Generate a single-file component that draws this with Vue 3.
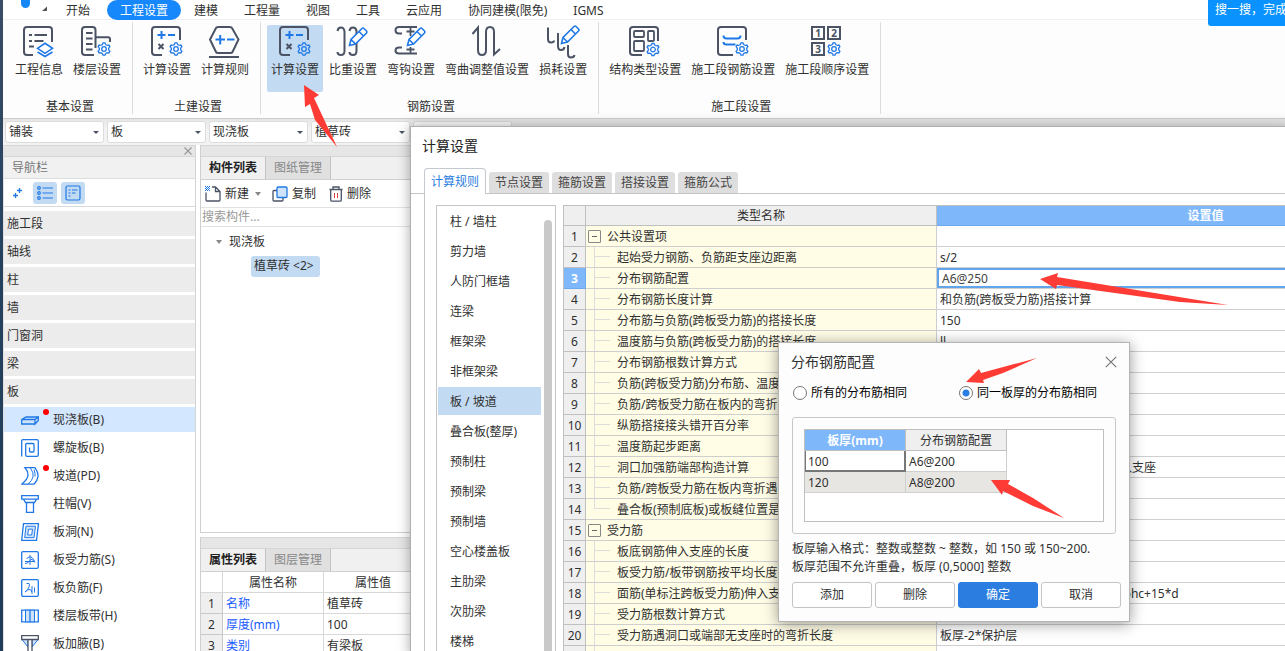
<script setup>
import { ref } from 'vue'

const DARK = '#4b5365'
const BLUE = '#1f78e6'
const LIGHT = '#cfe3fb'

const dark = (d, w = 2) => ({ d, stroke: DARK, w })
const blue = (d, w = 2) => ({ d, stroke: BLUE, w })
const line = (d, fill, w = 1.3) => ({ d, stroke: BLUE, w, fill })

function gear(cx, cy) {
  const points = []
  for (let i = 0; i < 6; i++) {
    const base = -90 + i * 60
    for (const [offset, radius] of [[-30, 4.6], [-15, 5.2], [-9, 6.3], [9, 6.3], [15, 5.2]]) {
      const a = ((base + offset) * Math.PI) / 180
      points.push(`${(cx + radius * Math.cos(a)).toFixed(2)} ${(cy + radius * Math.sin(a)).toFixed(2)}`)
    }
  }
  const hub = `M${cx - 2.3} ${cy}a2.3 2.3 0 1 0 4.6 0a2.3 2.3 0 1 0 -4.6 0z`
  return blue(`M${points.join('L')}Z${hub}`, 1.3)
}

function pencil(dx = 0, dy = 0) {
  return {
    d: `M${13.5 + dx} ${20.5 + dy}l1.5 -6L${26 + dx} ${3.5 + dy}q1 -1 2 0l2.5 2.5q1 1 0 2L${19.5 + dx} ${19 + dy}zM${23 + dx} ${6.5 + dy}l4.5 4.5M${15 + dx} ${14.5 + dy}l4.5 4.5`,
    stroke: BLUE,
    w: 1.6,
    fill: '#fff',
  }
}

const calcIcon = [
  dark('M12 30H5q-3 0-3-3V5q0-3 3-3h22q3 0 3 3v10'),
  blue('M7.5 10h8M11.5 6v8M18 10h7'),
  dark('M8.5 19l5 5M13.5 19l-5 5'),
  gear(26, 24),
]

const ribbon = [
  {
    label: '基本设置',
    tools: [
      {
        label: '工程信息',
        paths: [
          dark('M11 30H5q-3 0-3-3V5q0-3 3-3h22q3 0 3 3v12'),
          dark('M7 10h3M12.5 10H25M7 16h3M12.5 16h9M7 21.5h5', 1.8),
          blue('M15.5 23.3l7.5-5 7.5 5-7.5 5zM15.5 27l7.5 4.5 7.5-4.5', 1.6),
        ],
      },
      {
        label: '楼层设置',
        paths: [
          dark('M14 30H5q-3 0-3-3V5q0-3 3-3h7.5q3 0 3 3v18M15.5 12.3H28q2 0 2 2V17'),
          dark('M6 8h6.5M6 13.5h6.5M6 19h6.5M6 24.5h6.5', 1.8),
          gear(24, 24),
        ],
      },
    ],
  },
  {
    label: '土建设置',
    tools: [
      { label: '计算设置', paths: calcIcon },
      {
        label: '计算规则',
        paths: [
          dark('M2 14.5L8 3q.5-1 2-1h12q1.5 0 2 1l6.5 11.5L24.5 27q-.5 1-2 1H10q-1.5 0-2-1z'),
          dark('M1 32h30'),
          blue('M7.5 14.5h9.5M12.2 10v9.5M19 14.5h7.5'),
        ],
      },
    ],
  },
  {
    label: '钢筋设置',
    tools: [
      { label: '计算设置', active: true, paths: calcIcon },
      {
        label: '比重设置',
        paths: [
          dark('M1.5 6q.5-3.5 3.5-3.5t3.5 4V26q0 4-3.5 4t-3.5-3'),
          dark('M13.5 6q.5-3.5 3.5-3.5t3.5 3.5V26q0 4-3.5 4t-3.5-3'),
          pencil(),
        ],
      },
      {
        label: '弯钩设置',
        paths: [
          dark('M8 8.5H5q-3.5 0-3.5-3.2t3.5-3.3H23M8 22.5H5q-3.5 0-3.5 3t3.5 3H23'),
          dark('M16.5 2v9M12.5 6.5h8M16.5 22v6M12.5 24.5h8', 1.8),
          pencil(),
        ],
      },
      {
        label: '弯曲调整值设置',
        paths: [dark('M2.5 9L8 2.5V25q0 5 4 5t4-5V7q0-5 4-5t4 5V29.5L30 24')],
      },
      {
        label: '损耗设置',
        paths: [
          dark('M2 2.5V14q0 3.5 3 3.5t3-2M12 8v13q0 4 3 4t3.5-3M22 20v9q0 3.5 3 3.5t3.5-2.5'),
          pencil(2, -2),
        ],
      },
    ],
  },
  {
    label: '施工段设置',
    tools: [
      {
        label: '结构类型设置',
        paths: [
          dark('M14 30H5q-3 0-3-3V5q0-3 3-3h22q3 0 3 3v11'),
          dark('M7 6h8q1 0 1 1v4q0 1-1 1H7q-1 0-1-1V7q0-1 1-1zM21 6h4q1 0 1 1v8q0 1-1 1h-4q-1 0-1-1V7q0-1 1-1zM7 16h8q1 0 1 1v8q0 1-1 1H7q-1 0-1-1v-8q0-1 1-1z', 1.8),
          gear(25, 24.5),
        ],
      },
      {
        label: '施工段钢筋设置',
        paths: [
          dark('M17 30H5q-3 0-3-3V5q0-3 3-3h22q3 0 3 3v10'),
          blue('M7.5 10.5q0 3 3 3h11q3 0 3-3M7.5 17q0 2.500 3 2.500h9'),
          gear(26, 24),
        ],
      },
      {
        label: '施工段顺序设置',
        digits: [
          { n: '1', x: 8, y: 12 },
          { n: '2', x: 24, y: 12 },
          { n: '3', x: 8, y: 28 },
        ],
        paths: [dark('M2 2h12v12H2zM18 2h12v12H18zM2 18h12v12H2z'), gear(24, 24)],
      },
    ],
  },
]

const menus = ['开始', '工程设置', '建模', '工程量', '视图', '工具', '云应用', '协同建模(限免)', 'IGMS']
const selectors = ['铺装', '板', '现浇板', '植草砖', '']
const categories = ['施工段', '轴线', '柱', '墙', '门窗洞', '梁', '板']

const boxed = 'M2 .7h14q1.300 0 1.300 1.300v14q0 1.300-1.300 1.300H2Q.7 17.300 .7 16V2Q.7 .7 2 .7z'
const elements = [
  { label: '现浇板(B)', active: true, hot: true, paths: [line('M.7 8.500L5 6h12.300l-3.300 2.500zM14 8.500l3.300-2.500v3.500L14 13zM.7 8.500V13H14V8.500', LIGHT)] },
  { label: '螺旋板(B)', paths: [line('M.7 17.500V2Q.7 .7 2 .7h14q1.300 0 1.300 1.300v14q0 1.300-1.300 1.300H6q-1.300 0-1.300-1.300V5.500q0-1 1-1H12q1 0 1 1V12q0 1-1 1H9.500q-1 0-1-1V8.500')] },
  { label: '坡道(PD)', hot: true, paths: [line('M4 .7H14q3.500 5 3 9t-4 7.500H.7Q7 12 7 8T4 .7z'), line('M9.500 1q3.500 5 2.500 9T7 17', undefined, 1), line('M13 2.500q1.500 4 1 7', undefined, 1)] },
  { label: '柱帽(V)', paths: [line('M.7 .7h16.600v3.500H.7zM2.500 4.200h13l-2 3.300h-9zM5.500 7.500h7v9.800h-7z')] },
  { label: '板洞(N)', paths: [line('M2.500 .7h15L15.500 17.300H.7z'), line('M5 3.200h9.500L13 14.700H3.700z', LIGHT, 1), line('M7.500 6.200h4L10.700 12H6.700z', '#fff', 1)] },
  { label: '板受力筋(S)', paths: [line(boxed), line('M9 4v10M5.500 7.500q3.500-3 5.500-1t2.500 4M4 12.500q3.500 0 5-3t5 2M4 10.500h10', undefined, 1)] },
  { label: '板负筋(F)', paths: [line(boxed), line('M5.500 4.500H8q1 .5 0 3.500T4 13q3-3 5-2.500t1.500 2.500M11 7v8M13.500 8.500v5', undefined, 1)] },
  { label: '楼层板带(H)', paths: [line('M.7 3.200h16.600v11.600H.7z'), line('M4.500 3.200h9v11.600h-9z', LIGHT, 1), line('M9 3.200v11.600')] },
  { label: '板加腋(B)', paths: [line('M1 4.500L7 12V4.500zM17 4.500L11 12V4.500z', LIGHT, 1), { d: 'M.7 .7h16.600v3.800H.7zM7 4.500h4V18H7z', stroke: DARK, w: 1.3, fill: '#fff' }] },
]

const properties = [
  { name: '名称', value: '植草砖' },
  { name: '厚度(mm)', value: '100' },
  { name: '类别', value: '有梁板' },
]

const dialogTabs = ['计算规则', '节点设置', '箍筋设置', '搭接设置', '箍筋公式']
const members = ['柱 / 墙柱', '剪力墙', '人防门框墙', '连梁', '框架梁', '非框架梁', '板 / 坡道', '叠合板(整厚)', '预制柱', '预制梁', '预制墙', '空心楼盖板', '主肋梁', '次肋梁', '楼梯']
const rules = [
  { name: '公共设置项', group: true },
  { name: '起始受力钢筋、负筋距支座边距离', value: 's/2' },
  { name: '分布钢筋配置', edit: true },
  { name: '分布钢筋长度计算', value: '和负筋(跨板受力筋)搭接计算' },
  { name: '分布筋与负筋(跨板受力筋)的搭接长度', value: '150' },
  { name: '温度筋与负筋(跨板受力筋)的搭接长度', value: 'll' },
  { name: '分布钢筋根数计算方式' },
  { name: '负筋(跨板受力筋)分布筋、温度筋是否带弯勾' },
  { name: '负筋/跨板受力筋在板内的弯折' },
  { name: '纵筋搭接接头错开百分率' },
  { name: '温度筋起步距离' },
  { name: '洞口加强筋端部构造计算', value: '遇支座且平直段长度不足时弯折伸入支座' },
  { name: '负筋/跨板受力筋在板内弯折遇加腋' },
  { name: '叠合板(预制底板)或板缝位置是否布置', last: true },
  { name: '受力筋', group: true },
  { name: '板底钢筋伸入支座的长度' },
  { name: '板受力筋/板带钢筋按平均长度计算' },
  { name: '面筋(单标注跨板受力筋)伸入支座', value: '能直锚就直锚,否则按公式计算: ha-bhc+15*d' },
  { name: '受力筋根数计算方式' },
  { name: '受力筋遇洞口或端部无支座时的弯折长度', value: '板厚-2*保护层' },
  { name: '' },
]

const distribution = ref('A6@250')
const mode = ref('thickness')
const search = ref('')
</script>

<template>
  <div class="app">
    <div class="edge"></div>
    <div class="main">
      <nav class="menubar">
        <svg class="logo" width="44" height="19" viewBox="0 0 44 19" aria-hidden="true">
          <path d="M18 0h9v3.500a4.500 4.500 0 0 1-9 0z" fill="#1687f7" />
          <path d="M39 11h5V6.500z" fill="#555" />
        </svg>
        <button v-for="(m, i) in menus" :key="m" class="menu" :class="{ current: i === 1 }">{{ m }}</button>
      </nav>

      <div class="ribbon">
        <section v-for="group in ribbon" :key="group.label" class="group">
          <div class="tools">
            <button v-for="tool in group.tools" :key="tool.label" class="tool" :class="{ active: tool.active }">
              <svg width="34" height="34" viewBox="0 0 34 34" fill="none" aria-hidden="true">
                <path v-for="(p, i) in tool.paths" :key="i" :d="p.d" :stroke="p.stroke" :stroke-width="p.w" :fill="p.fill || 'none'" />
                <text v-for="t in tool.digits || []" :key="t.n" :x="t.x" :y="t.y" class="digit">{{ t.n }}</text>
              </svg>
              <span>{{ tool.label }}</span>
            </button>
          </div>
          <div class="group-label">{{ group.label }}</div>
        </section>
      </div>

      <div class="workspace">
        <div class="selectors">
          <div v-for="(s, i) in selectors" :key="i" class="selector">
            <select :aria-label="'构件选择 ' + (i + 1)"><option>{{ s }}</option></select>
          </div>
        </div>

        <div class="panels">
          <aside class="nav">
            <div class="strip">
              <button class="strip-close" aria-label="关闭">
                <svg width="8" height="8" viewBox="0 0 8 8"><path d="M.5 .5l7 7M7.500 .5l-7 7" stroke="#999" stroke-width="1.200" /></svg>
              </button>
            </div>
            <div class="nav-title">导航栏</div>
            <div class="nav-tools">
              <button class="nav-tool" aria-label="添加">
                <svg width="20" height="18" viewBox="0 0 20 18" fill="none" stroke="#1f78e6" stroke-width="1.300"><path d="M10 6.500h5M12.500 4v5M6 11.500h5M8.500 9v5" /></svg>
              </button>
              <button class="nav-tool on" aria-label="列表">
                <svg width="18" height="16" viewBox="0 0 18 16" fill="none" stroke="#1f78e6" stroke-width="1.200">
                  <circle cx="3" cy="3" r="1.300" /><circle cx="3" cy="8" r="1.300" /><circle cx="3" cy="13" r="1.300" />
                  <path d="M6.500 3H17M6.500 8H17M6.500 13H17" />
                </svg>
              </button>
              <button class="nav-tool on" aria-label="详情">
                <svg width="16" height="16" viewBox="0 0 16 16" fill="none" stroke="#1f78e6" stroke-width="1.200">
                  <rect x="1" y="1" width="14" height="14" rx="1.500" /><path d="M3.500 5h2M7 5h5.500M3.500 8h2M7 8h3.500M3.500 11h2" />
                </svg>
              </button>
            </div>
            <div class="nav-list">
              <button v-for="c in categories" :key="c" class="category">{{ c }}</button>
              <button v-for="e in elements" :key="e.label" class="element" :class="{ active: e.active }">
                <span class="element-icon">
                  <svg width="18" height="18" viewBox="0 0 18 18" aria-hidden="true">
                    <path v-for="(p, i) in e.paths" :key="i" :d="p.d" :stroke="p.stroke" :stroke-width="p.w" :fill="p.fill || 'none'" />
                  </svg>
                  <i v-if="e.hot" class="hot"></i>
                </span>
                {{ e.label }}
              </button>
            </div>
          </aside>

          <div class="side">
            <section class="panel components">
              <div class="strip"></div>
              <div class="tabs">
                <button class="tab on">构件列表</button>
                <button class="tab">图纸管理</button>
              </div>
              <div class="actions">
                <button class="action">
                  <svg width="16" height="16" viewBox="0 0 16 16" fill="none">
                    <path d="M1 6.500V14q0 1 1 1h12q1 0 1-1V5.500L10.500 1H7M10.500 1v4.500H15" stroke="#4b5365" stroke-width="1.300" />
                    <path d="M0 .5h5M0 2.500h5M0 4.500h5M1 1.500h4M1 3.500h4" stroke="#1f78e6" stroke-dasharray="1 1" />
                  </svg>
                  新建
                  <i class="caret more"></i>
                </button>
                <button class="action">
                  <svg width="16" height="16" viewBox="0 0 16 16">
                    <rect x="1" y="4.500" width="10" height="10.500" rx="1" fill="#fff" stroke="#4b5365" stroke-width="1.300" />
                    <rect x="5" y="1" width="10" height="10.500" rx="1" fill="#cfe3fb" stroke="#1f78e6" stroke-width="1.300" />
                  </svg>
                  复制
                </button>
                <button class="action">
                  <svg width="14" height="16" viewBox="0 0 14 16" fill="none">
                    <path d="M.5 3.500h13M4 3.500V1h6v2.500M1.700 3.500V14q0 1.200 1.200 1.200h8.200q1.200 0 1.200-1.200V3.500" stroke="#4b5365" stroke-width="1.300" />
                    <path d="M5.500 7v5M8.500 7v5" stroke="#e03a3a" stroke-width="1" />
                  </svg>
                  删除
                </button>
              </div>
              <input v-model="search" class="search" type="text" placeholder="搜索构件..." aria-label="搜索构件" />
              <ul class="tree">
                <li class="branch"><i class="caret"></i>现浇板</li>
                <li class="leaf"><span>植草砖 &lt;2&gt;</span></li>
              </ul>
            </section>

            <section class="panel">
              <div class="strip"></div>
              <div class="tabs">
                <button class="tab on">属性列表</button>
                <button class="tab">图层管理</button>
              </div>
              <table class="props">
                <thead>
                  <tr><th class="idx"></th><th class="pname">属性名称</th><th>属性值</th></tr>
                </thead>
                <tbody>
                  <tr v-for="(p, i) in properties" :key="p.name">
                    <td class="idx">{{ i + 1 }}</td><td class="key">{{ p.name }}</td><td>{{ p.value }}</td>
                  </tr>
                </tbody>
              </table>
            </section>
          </div>
        </div>
      </div>
    </div>

    <section class="dialog" role="dialog" aria-label="计算设置">
      <h2 class="dialog-title">计算设置</h2>
      <div class="dialog-tabs">
        <button v-for="(t, i) in dialogTabs" :key="t" class="dtab" :class="{ on: i === 0 }">{{ t }}</button>
      </div>
      <div class="dialog-body">
        <div class="members">
          <ul>
            <li v-for="m in members" :key="m" :class="{ active: m === '板 / 坡道' }">{{ m }}</li>
          </ul>
          <div class="scrollbar"></div>
        </div>
        <div class="rules-wrap">
          <table class="rules">
            <colgroup><col class="c-num" /><col class="c-name" /><col class="c-value" /></colgroup>
            <thead>
              <tr><th></th><th>类型名称</th><th class="picked">设置值</th></tr>
            </thead>
            <tbody>
              <tr v-for="(r, i) in rules" :key="i">
                <td class="num" :class="{ picked: r.edit }">{{ i + 1 }}</td>
                <td class="name" :class="{ parent: r.group, last: r.last }">
                  <button v-if="r.group" class="fold" aria-label="折叠"></button>{{ r.name }}
                </td>
                <td class="value" :class="{ editing: r.edit }">
                  <input v-if="r.edit" v-model="distribution" type="text" :aria-label="r.name" />
                  <template v-else>{{ r.value }}</template>
                </td>
              </tr>
            </tbody>
          </table>
        </div>
      </div>
    </section>

    <section class="popup" role="dialog" aria-label="分布钢筋配置">
      <header class="popup-head">
        <h2>分布钢筋配置</h2>
        <button class="popup-close" aria-label="关闭">
          <svg width="12" height="12" viewBox="0 0 12 12"><path d="M.8 .8l10.400 10.400M11.200 .8L.8 11.200" stroke="#777" stroke-width="1.200" /></svg>
        </button>
      </header>
      <div class="radios">
        <label><input v-model="mode" type="radio" name="mode" value="all" />所有的分布筋相同</label>
        <label><input v-model="mode" type="radio" name="mode" value="thickness" />同一板厚的分布筋相同</label>
      </div>
      <div class="frame">
        <div class="grid">
          <table>
            <thead><tr><th class="picked">板厚(mm)</th><th>分布钢筋配置</th></tr></thead>
            <tbody>
              <tr><td class="focus">100</td><td>A6@200</td></tr>
              <tr class="alt"><td>120</td><td>A8@200</td></tr>
            </tbody>
          </table>
        </div>
      </div>
      <p class="hint">板厚输入格式：整数或整数 ~ 整数，如 150 或 150~200.<br />板厚范围不允许重叠，板厚 (0,5000] 整数</p>
      <div class="buttons">
        <button>添加</button>
        <button>删除</button>
        <button class="primary">确定</button>
        <button>取消</button>
      </div>
    </section>

    <a class="search-tip" href="#">搜一搜，完成</a>

    <svg class="arrows" width="1285" height="651" viewBox="0 0 1285 651" fill="#ff3b35" aria-hidden="true">
      <path d="M304 85L319 95L314 98L337 147L315 120L310 104L305 107Z" />
      <path d="M1040 279L1058 273L1057 277L1228 305L1180 302L1057 285L1056 289Z" />
      <path d="M966 382L979 369L981 373L1037 358L1003 373L983 380L984 383Z" />
      <path d="M991 480L1010 480L1008 484L1033 498L1064 518L1033 506L1003 491L1002 495Z" />
    </svg>
  </div>
</template>

<style>
html, body { margin: 0; overflow: hidden; }
</style>

<style scoped>
.app {
  position: relative;
  display: flex;
  height: 100vh;
  overflow: hidden;
  background: #fff;
  color: #303030;
  font-family: "Noto Sans", "Noto Sans CJK SC", sans-serif;
  font-size: 12px;
  line-height: 20px;
}
.app * { box-sizing: border-box; }
button, input, select { font: inherit; color: inherit; margin: 0; }
button { border: 0; padding: 0; background: none; line-height: inherit; white-space: nowrap; }
ul { list-style: none; margin: 0; padding: 0; }
h2 { margin: 0; font-size: 14px; font-weight: 400; }
svg { display: block; flex: none; }
table { border-collapse: separate; border-spacing: 0; table-layout: fixed; }
th { font-weight: 400; }
th, td { padding: 0; white-space: nowrap; overflow: hidden; }

.edge { width: 3px; flex: none; background: linear-gradient(#3b4c66, #24425e 40%, #1f3b58); }
.main { flex: 1; min-width: 0; display: flex; flex-direction: column; }

.menubar { display: flex; height: 20px; flex: none; border-bottom: 1px solid #f0f0f0; }
.logo { margin-right: 6px; }
.menu { height: 20px; padding: 1px 13px 0; line-height: 20px; }
.menu.current { margin-left: 4px; border-radius: 10px; background: #1688fb; color: #fff; }

.ribbon { display: flex; height: 99px; flex: none; padding: 2px 0 4px; border-bottom: 1px solid #ccc; background: #fdfdfd; }
.group { display: flex; flex-direction: column; justify-content: space-between; padding: 3px 7px 0 6px; border-right: 1px solid #dcdcdc; }
.group:first-child { padding-left: 8px; }
.tools { display: flex; gap: 2px; }
.tool { display: flex; flex-direction: column; align-items: center; height: 67px; padding: 0 4px; border-radius: 2px; }
.tool.active { background: #c2daf2; }
.tool span { line-height: 22px; }
.digit { fill: #4b5365; font-size: 10px; font-weight: 700; text-anchor: middle; }
.group-label { padding-left: 4px; text-align: center; line-height: 14px; }

.workspace { flex: 1; min-height: 0; display: flex; flex-direction: column; background: #f2f2f2; }
.selectors { display: flex; gap: 3px; height: 26px; flex: none; padding: 2px; background: linear-gradient(#e6e6e6, #f3f3f3 40%); }
.selector { position: relative; width: 99px; height: 22px; border: 1px solid #dcdcdc; border-radius: 3px; background: #fff; }
.selector::after { content: ""; position: absolute; right: 4px; top: 9px; border: 3px solid transparent; border-top-color: #4b5365; border-bottom: 0; pointer-events: none; }
.selector select { appearance: none; width: 100%; height: 20px; padding: 0 3px; border: 0; background: none; line-height: 20px; outline: 0; }
.panels { flex: 1; min-height: 0; display: flex; gap: 4px; background: #fff; }

.strip { height: 12px; flex: none; display: flex; justify-content: flex-end; align-items: center; padding-right: 3px; background: #e6e6e6; border-bottom: 1px solid #d6d6d6; border-top: 1px solid #d6d6d6; }
.nav { width: 193px; flex: none; display: flex; flex-direction: column; border-right: 1px solid #d4d4d4; border-left: 1px solid #e0e0e0; overflow: hidden; }
.nav-title { height: 22px; flex: none; padding-left: 8px; line-height: 22px; color: #777; background: #f1f1f1; border-bottom: 1px solid #ddd; }
.nav-tools { display: flex; align-items: center; gap: 4px; height: 28px; flex: none; padding: 0 1px; border-bottom: 1px solid #d8d8d8; }
.nav-tool { display: flex; align-items: center; justify-content: center; width: 24px; height: 22px; border-radius: 3px; }
.nav-tool.on { background: #c2daf2; }
.nav-list { display: flex; flex-direction: column; gap: 3px; padding-top: 4px; }
.category { height: 25px; padding-left: 3px; text-align: left; background: #ececec; }
.element { display: flex; align-items: center; gap: 14px; height: 25px; padding-left: 17px; }
.element.active { background: #d3e7ff; }
.element-icon { position: relative; }
.hot { position: absolute; left: 22px; top: -2px; width: 6px; height: 6px; border-radius: 50%; background: #f00; }

.side { width: 223px; flex: none; display: flex; flex-direction: column; gap: 4px; }
.panel { height: 114px; flex: none; border-left: 1px solid #cfcfcf; overflow: hidden; }
.components { flex: 1; height: auto; min-height: 0; border-bottom: 1px solid #d0d0d0; }
.tabs { display: flex; height: 23px; background: #f0f0f0; border-bottom: 1px solid #d0d0d0; }
.tab { width: 65px; height: 22px; line-height: 22px; border-right: 1px solid #c4c4c4; background: #e0e0e0; color: #888; }
.tab.on { background: #f0f0f0; color: #222; font-weight: 700; }
.actions { display: flex; align-items: center; gap: 13px; height: 28px; padding-left: 4px; border-bottom: 1px solid #e2e2e2; }
.action { display: flex; align-items: center; gap: 4px; }
.caret { width: 0; height: 0; border: 3px solid transparent; border-top: 4px solid #888; border-bottom: 0; }
.caret.more { margin: 0 -2px 0 2px; }
.search { display: block; width: 100%; height: 19px; padding: 0 1px; border: 0; border-bottom: 1px solid #e2e2e2; outline: 0; background: #fff; }
.search::placeholder { color: #999; opacity: 1; }
.tree { padding: 3px 0 0 15px; }
.branch { display: flex; align-items: center; gap: 7px; height: 24px; }
.leaf { display: flex; align-items: center; height: 24px; padding-left: 35px; }
.leaf span { height: 21px; padding: 0 6px 0 3px; border-radius: 3px; background: #c2daf2; }
.props { width: 222px; }
.props th, .props td { height: 21px; border-right: 1px solid #d8d8d8; border-bottom: 1px solid #d8d8d8; line-height: 18px; text-align: left; padding: 2px 0 0 3px; }
.props th { text-align: center; padding-left: 0; }
.props .idx { width: 22px; text-align: center; padding-left: 0; }
.props td.idx { background: #efefef; border-color: #c8c8c8; }
.props .pname { width: 101px; }
.props .key { color: #1a5cff; }

.dialog { position: absolute; left: 410px; top: 126px; right: -6px; bottom: -6px; display: flex; flex-direction: column; border: 1px solid #b0b0b0; background: #fff; box-shadow: 0 0 12px rgba(0, 0, 0, 0.35); overflow: hidden; }
.dialog-title { height: 41px; flex: none; padding: 0 11px; line-height: 38px; color: #222; }
.dialog-tabs { display: flex; align-items: flex-end; gap: 3px; height: 26px; flex: none; padding-left: 13px; border-bottom: 1px solid #c4c4c4; }
.dtab { width: 60px; height: 21px; border-radius: 3px 3px 0 0; background: #dedede; color: #444; line-height: 21px; }
.dtab.on { width: 62px; height: 26px; margin-bottom: -1px; border: 1px solid #c4c9d0; border-bottom: 0; border-radius: 4px 4px 0 0; background: #fff; color: #2a7de1; line-height: 25px; }
.dialog-body { flex: 1; min-height: 0; display: flex; gap: 7px; margin-left: 13px; padding: 11px 0 0 11px; border-left: 1px solid #c4c4c4; overflow: hidden; }
.members { display: flex; justify-content: space-between; width: 120px; flex: none; padding: 1px 3px 0 1px; border: 1px solid #c4c4c4; overflow: hidden; }
.members ul { display: flex; flex-direction: column; gap: 2px; width: 103px; }
.members li { height: 28px; flex: none; padding-left: 12px; line-height: 30px; }
.members li.active { background: #c2daf2; }
.scrollbar { width: 8px; margin-top: 13px; border-radius: 4px; background: #c9c9c9; }
.rules-wrap { flex: 1; min-width: 0; overflow: hidden; border-top: 1px solid #c0c0c0; border-left: 1px solid #c0c0c0; }
.rules { width: 911px; }
.c-num { width: 22px; }
.c-name { width: 351px; }
.rules th, .rules td { height: 21px; border-right: 1px solid #cfcfcf; border-bottom: 1px solid #cfcfcf; padding-top: 2px; line-height: 18px; }
.rules th { height: 20px; padding-top: 1px; background: #efefef; border-color: #c0c0c0; }
.rules .num { text-align: center; background: #efefef; border-color: #c0c0c0; }
.rules .picked { background: #7fb8fa; color: #fff; font-weight: 700; border-color: #6ba8ec; }
.rules .name {
  padding-left: 31px;
  background-color: #fffde6;
  background-image: linear-gradient(#dcdcdc, #dcdcdc), linear-gradient(#dcdcdc, #dcdcdc);
  background-repeat: no-repeat;
  background-size: 1px 100%, 16px 1px;
  background-position: 8px 0, 8px 9px;
}
.rules .name.last { background-size: 1px 9px, 16px 1px; }
.rules .name.parent { padding-left: 2px; background-image: none; }
.fold { display: inline-block; width: 13px; height: 13px; margin-right: 6px; border: 1px solid #888; border-radius: 1px; vertical-align: -1px; background: linear-gradient(#666, #666) 3px 5px / 5px 1px no-repeat; }
.rules .value { padding-left: 3px; background: #fff; }
.rules .value.editing { padding: 0; }
.editing input { display: block; width: 100%; height: 20px; padding: 1px 3px 0; border: 2px solid #62a5ea; outline: 0; background: #fff; color: #444; }

.popup { position: absolute; left: 778px; top: 342px; width: 352px; border: 1px solid #b4b4b4; background: #fdfdfd; box-shadow: 0 2px 14px rgba(0, 0, 0, 0.4); padding: 9px 8px 13px 13px; }
.popup-head { display: flex; justify-content: space-between; align-items: center; height: 20px; padding-right: 4px; }
.popup-head h2 { margin-left: -1px; }
.radios { display: grid; grid-template-columns: 166px 1fr; height: 20px; margin-top: 11px; color: #000; }
.radios label { display: flex; align-items: center; gap: 4px; }
.radios input { appearance: none; width: 14px; height: 14px; margin-left: 1px; border: 1px solid #777; border-radius: 50%; background: #fff; }
.radios input:checked { background: radial-gradient(circle, #2a7de1 3px, #fff 4px); }
.frame { margin: 14px 5px 0 0; padding: 11px; border: 1px solid #c8c8c8; border-radius: 3px; }
.grid { height: 93px; border: 1px solid #c0c0c0; background: #fff; }
.grid table { width: 202px; }
.grid th, .grid td { height: 21px; border-right: 1px solid #cfcfcf; border-bottom: 1px solid #cfcfcf; line-height: 18px; text-align: left; padding: 2px 0 0 3px; }
.grid th { background: #efefef; text-align: center; padding-left: 0; border-color: #c0c0c0; }
.grid th.picked { background: #7fb8fa; color: #fff; font-weight: 700; }
.grid td.focus { border-right: 2px solid #777; border-bottom: 2px solid #777; box-shadow: inset 1px 0 #777; line-height: 17px; }
.grid .alt td { background: #e8e6e3; }
.hint { margin: 6px 0 0; line-height: 18px; white-space: nowrap; }
.buttons { display: flex; gap: 3px; margin-top: 6px; }
.buttons button { width: 80px; height: 26px; border: 1px solid #c4c4c4; border-radius: 3px; background: #fff; line-height: 24px; }
.buttons .primary { border-color: #2b7de0; background: #2b7de0; color: #fff; }

.search-tip { position: absolute; right: 0; top: 0; width: 77px; height: 26px; padding-left: 7px; overflow: hidden; white-space: nowrap; border-radius: 0 0 0 3px; background: #0a93ff; color: #fff; text-decoration: none; }
.arrows { position: absolute; left: 0; top: 0; pointer-events: none; }
</style>
